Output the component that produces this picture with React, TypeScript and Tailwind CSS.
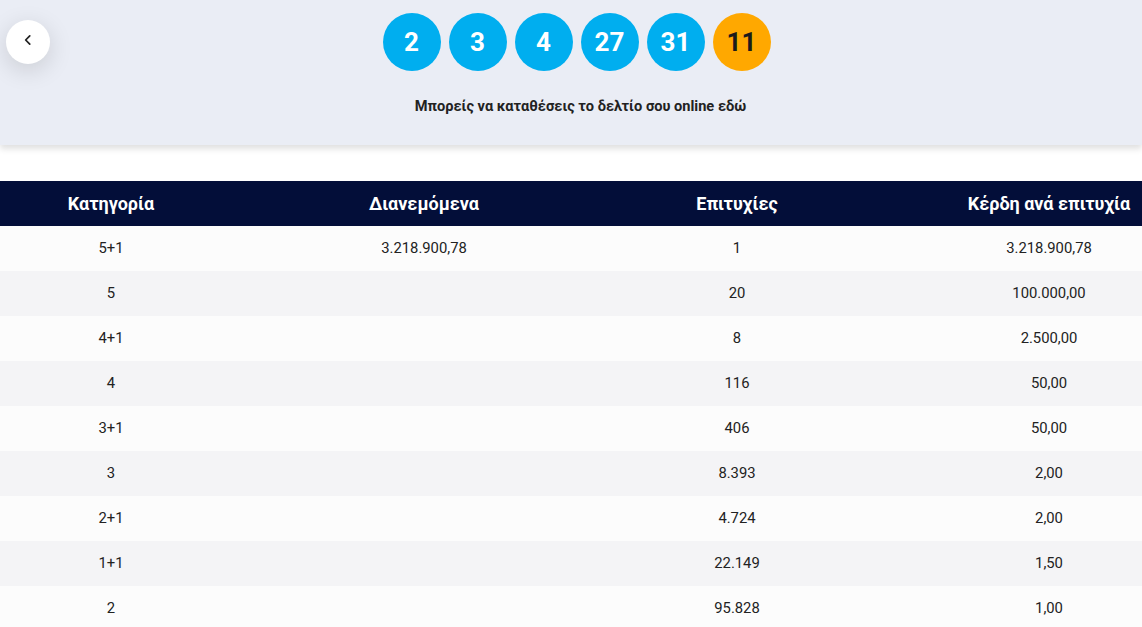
import React from 'react';

const balls = [
  { n: '2', bonus: false },
  { n: '3', bonus: false },
  { n: '4', bonus: false },
  { n: '27', bonus: false },
  { n: '31', bonus: false },
  { n: '11', bonus: true },
];

const rows = [
  ['5+1', '3.218.900,78', '1', '3.218.900,78'],
  ['5', '', '20', '100.000,00'],
  ['4+1', '', '8', '2.500,00'],
  ['4', '', '116', '50,00'],
  ['3+1', '', '406', '50,00'],
  ['3', '', '8.393', '2,00'],
  ['2+1', '', '4.724', '2,00'],
  ['1+1', '', '22.149', '1,50'],
  ['2', '', '95.828', '1,00'],
];

const cols = 'grid grid-cols-[222px_404px_222px_402px]';

export default function App() {
  return (
    <div className="w-[1142px] h-[627px] overflow-hidden bg-white font-['Roboto','Liberation_Sans',sans-serif] text-[#222]">
      <div className="relative h-[145px] bg-[#eaedf5] shadow-[0_4px_6px_rgba(0,0,0,0.12)]">
        <button className="absolute left-[6px] top-[20px] w-[44px] h-[44px] rounded-full bg-white flex items-center justify-center shadow-[0_6px_24px_rgba(0,0,0,0.14)]">
          <svg className="w-[14px] h-[14px] text-[#222] -mt-[4px]" fill="none" stroke="currentColor" viewBox="0 0 24 24">
            <path strokeLinecap="round" strokeLinejoin="round" strokeWidth="3" d="M15 5l-7 7 7 7" />
          </svg>
        </button>
        <div className="flex flex-col items-center pl-[11px] pt-[13px]">
          <div className="flex gap-[8px]">
            {balls.map((b, i) => (
              <div
                key={i}
                className={`w-[58px] h-[58px] rounded-full flex items-center justify-center text-[26px] font-bold ${
                  b.bonus ? 'bg-[#ffa800] text-[#1b1b1b]' : 'bg-[#00aeef] text-white'
                }`}
              >
                {b.n}
              </div>
            ))}
          </div>
          <p className="mt-[25px] text-[14.6px] font-bold text-[#222] pl-[8px]">Μπορείς να καταθέσεις το δελτίο σου online εδώ</p>
        </div>
      </div>

      <div className="mt-[36px]">
        <div className={`${cols} h-[45px] bg-[#030e39] text-white text-[18px] font-bold items-center text-center`}>
          <div>Κατηγορία</div>
          <div>Διανεμόμενα</div>
          <div>Επιτυχίες</div>
          <div>Κέρδη ανά επιτυχία</div>
        </div>
        {rows.map((r, i) => (
          <div
            key={i}
            className={`${cols} h-[45px] items-center text-center text-[14.8px] ${i % 2 === 0 ? 'bg-[#fcfcfc]' : 'bg-[#f4f4f6]'}`}
          >
            {r.map((c, j) => (
              <div key={j}>{c}</div>
            ))}
          </div>
        ))}
      </div>
    </div>
  );
}
